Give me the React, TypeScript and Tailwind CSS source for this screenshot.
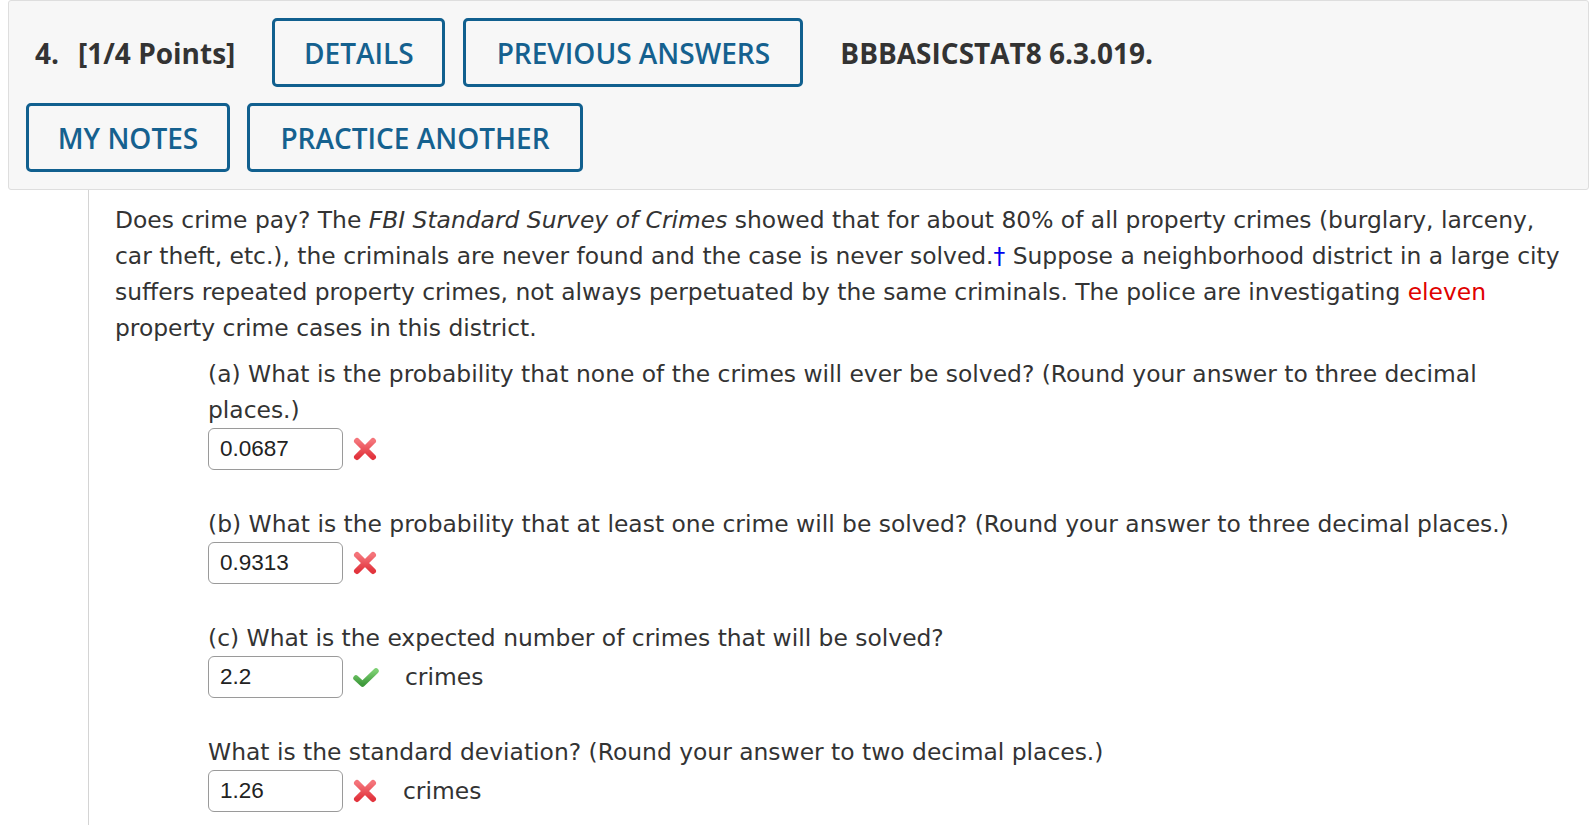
import React from "react";

const body = { fontFamily: '"DejaVu Sans", Verdana, sans-serif' };
const head = { fontFamily: '"Open Sans", "Liberation Sans", sans-serif' };
const inp = { fontFamily: '"Liberation Sans", Arial, sans-serif' };

function XIcon() {
  return (
    <svg width="26" height="26" viewBox="0 0 26 26" className="shrink-0">
      <defs>
        <linearGradient id="xg" x1="0" y1="0" x2="0" y2="1">
          <stop offset="0" stopColor="#f4747a" />
          <stop offset="1" stopColor="#e2343d" />
        </linearGradient>
      </defs>
      <path d="M5 5 L21 21 M21 5 L5 21" stroke="url(#xg)" strokeWidth="6" strokeLinecap="round" fill="none" />
    </svg>
  );
}

function CheckIcon() {
  return (
    <svg width="28" height="24" viewBox="0 0 28 24" className="shrink-0">
      <defs>
        <linearGradient id="cg" x1="0" y1="0" x2="0" y2="1">
          <stop offset="0" stopColor="#7ccf72" />
          <stop offset="1" stopColor="#3f9a3c" />
        </linearGradient>
      </defs>
      <path d="M4 13 L10.5 19 L24 6" stroke="url(#cg)" strokeWidth="5.5" strokeLinecap="round" strokeLinejoin="round" fill="none" />
    </svg>
  );
}

function Btn({ w, children }: { w: string; children: React.ReactNode }) {
  return (
    <div
      className={`${w} h-[69px] shrink-0 flex items-center justify-center border-[3px] border-[#11608f] rounded-[5px] text-[28px] font-semibold text-[#15618f] bg-[#f7f7f7]`}
      style={head}
    >
      {children}
    </div>
  );
}

function Answer({ value, ok, unit, unitGap }: { value: string; ok: boolean; unit?: string; unitGap?: string }) {
  return (
    <div className="flex items-center h-[42px]">
      <div
        className="w-[135px] h-[42px] border border-[#9a9a9a] rounded-[6px] bg-white flex items-center pl-[11px] text-[22.5px] text-[#222]"
        style={inp}
      >
        {value}
      </div>
      <div className="ml-[9px] flex items-center">{ok ? <CheckIcon /> : <XIcon />}</div>
      {unit && <span className={`${unitGap} text-[23.4px] text-[#333]`}>{unit}</span>}
    </div>
  );
}

export default function App() {
  return (
    <div className="w-[1591px] h-[825px] overflow-hidden bg-white">
      <div className="ml-[8px] mr-[2px] border border-[#dedede] bg-[#f7f7f7] rounded-[3px] pt-[17px] pb-[17px] pl-[17px]">
        <div className="flex items-center">
          <div className="ml-[9px] text-[28px] font-bold text-[#333] whitespace-nowrap" style={head}>
            <span className="mr-[19px]">4.</span>[1/4 Points]
          </div>
          <div className="ml-[37px]">
            <Btn w="w-[173px]">DETAILS</Btn>
          </div>
          <div className="ml-[18px]">
            <Btn w="w-[340px]">PREVIOUS ANSWERS</Btn>
          </div>
          <div className="ml-[37px] text-[28px] font-bold text-[#333] whitespace-nowrap" style={head}>
            BBBASICSTAT8 6.3.019.
          </div>
        </div>
        <div className="flex items-center mt-[16px]">
          <Btn w="w-[204px]">MY NOTES</Btn>
          <div className="ml-[17px]">
            <Btn w="w-[336px]">PRACTICE ANOTHER</Btn>
          </div>
        </div>
      </div>

      <div className="ml-[88px] border-l border-[#d4d4d4] pl-[26px] pt-[12px] h-[700px] text-[23.4px] leading-[36px] text-[#333]" style={body}>
        <div className="whitespace-nowrap">
          <div>
            Does crime pay? The <i>FBI Standard Survey of Crimes</i> showed that for about 80% of all property crimes (burglary, larceny,
          </div>
          <div>
            car theft, etc.), the criminals are never found and the case is never solved.<span className="text-[#0000ee]">†</span> Suppose a neighborhood district in a large city
          </div>
          <div>
            suffers repeated property crimes, not always perpetuated by the same criminals. The police are investigating{" "}
            <span className="text-[#e00000]">eleven</span>
          </div>
          <div>property crime cases in this district.</div>
        </div>

        <div className="pl-[93px] mt-[10px] whitespace-nowrap">
          <div>
            <div>(a) What is the probability that none of the crimes will ever be solved? (Round your answer to three decimal</div>
            <div>places.)</div>
            <Answer value="0.0687" ok={false} />
          </div>
          <div className="mt-[36px]">
            <div>(b) What is the probability that at least one crime will be solved? (Round your answer to three decimal places.)</div>
            <Answer value="0.9313" ok={false} />
          </div>
          <div className="mt-[36px]">
            <div>(c) What is the expected number of crimes that will be solved?</div>
            <Answer value="2.2" ok={true} unit="crimes" unitGap="ml-[25px]" />
          </div>
          <div className="mt-[36px]">
            <div>What is the standard deviation? (Round your answer to two decimal places.)</div>
            <Answer value="1.26" ok={false} unit="crimes" unitGap="ml-[25px]" />
          </div>
        </div>
      </div>
    </div>
  );
}
